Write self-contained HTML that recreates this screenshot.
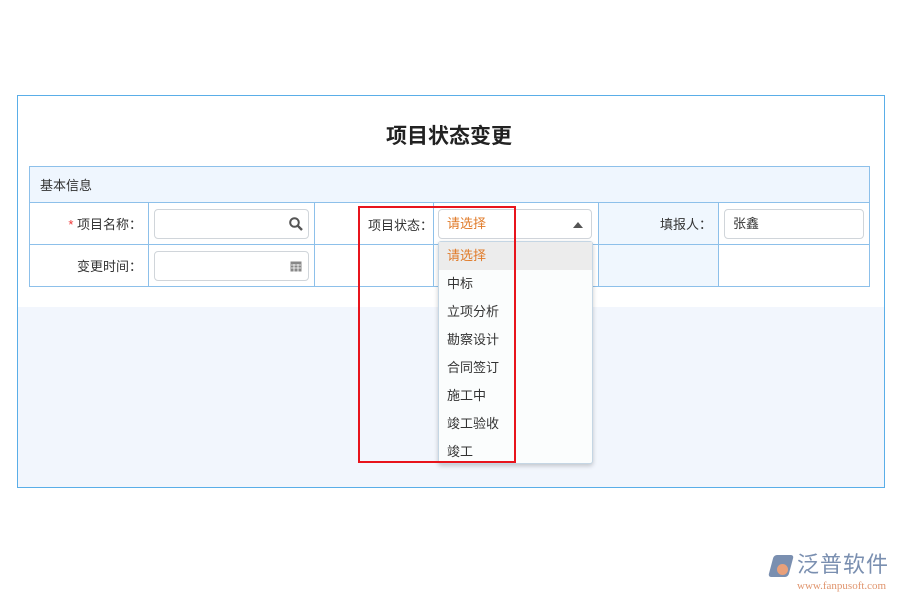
<!DOCTYPE html>
<html><head><meta charset="utf-8"><style>
*{box-sizing:border-box;margin:0;padding:0}
body{width:900px;height:600px;background:#fff;position:relative;font-family:"Liberation Sans","Noto Sans CJK SC",sans-serif;font-size:13px;color:#333;overflow:hidden}
.outer{position:absolute;left:17px;top:95px;width:868px;height:393px;border:1px solid #5aaee8;background:#fff}
.lower{position:absolute;left:18px;top:307px;width:866px;height:180px;background:#f2f6fd}
.title{position:absolute;left:0;width:898px;top:120px;text-align:center;font-size:21px;font-weight:bold;color:#222}
table{position:absolute;left:29px;top:166px;border-collapse:collapse;width:841px}
td{border:1px solid #8dc0ea;height:42px;font-size:13px}
.hd td{height:36px;background:#eff6fe;padding-left:10px}
.lb{text-align:right;padding-right:6px;background:#f0f7fe}
.inp{height:30px;border:1px solid #d0d5da;border-radius:4px;background:#fff;margin:0 5px;position:relative;padding-left:8px;line-height:28px}
.dd{position:absolute;left:438px;top:241px;width:155px;height:223px;background:#fbfdfd;border:1px solid #c5d6e4;border-radius:3px;box-shadow:0 2px 5px rgba(0,0,0,.2)}
.dd div{height:28px;line-height:28px;padding-left:8px;font-size:13px}
.red{position:absolute;left:358px;top:206px;width:158px;height:257px;border:2px solid #e8141c}
</style></head><body>
<div class="outer"></div>
<div class="lower"></div>
<div class="title">项目状态变更</div>
<table>
<tr class="hd"><td colspan="6">基本信息</td></tr>
<tr>
<td class="lb" style="width:119px;background:#fff"><span style="color:#e33">*</span> 项目名称：</td>
<td style="width:166px"><div class="inp"><svg style="position:absolute;right:5px;top:7px" width="14" height="14" viewBox="0 0 14 14"><circle cx="5.5" cy="5.5" r="4.3" fill="none" stroke="#555" stroke-width="2"/><path d="M8.7 8.7 13 13" stroke="#555" stroke-width="2.4"/></svg></div></td>
<td class="lb" style="width:119px;background:#fff"></td>
<td style="width:165px"></td>
<td class="lb" style="width:120px">填报人：</td>
<td><div class="inp">张鑫</div></td>
</tr>
<tr>
<td class="lb" style="background:#fff">变更时间：</td>
<td><div class="inp"><svg style="position:absolute;right:6px;top:8px" width="12" height="12" viewBox="0 0 12 12"><rect x="0.5" y="1.5" width="11" height="10" fill="#888"/><path d="M1 5h10M1 8h10M4 4v8M8 4v8" stroke="#fff" stroke-width="0.8"/></svg></div></td>
<td class="lb" style="background:#fff"></td><td></td><td class="lb"></td><td></td>
</tr>
</table>
<div style="position:absolute;left:368px;top:215px;font-size:13px">项目状态：</div>
<div class="inp" style="position:absolute;left:433px;top:209px;width:154px;color:#e07b2a">请选择<svg style="position:absolute;right:8px;top:12px" width="10" height="6"><path d="M0 6 5 0 10 6z" fill="#555"/></svg></div>
<div class="dd">
<div style="background:#ececec;color:#e07b2a">请选择</div><div>中标</div><div>立项分析</div><div>勘察设计</div><div>合同签订</div><div>施工中</div><div>竣工验收</div><div>竣工</div>
</div>
<div class="red"></div>
<div style="position:absolute;left:771px;top:555px;width:20px;height:22px;background:#7a8fb0;transform:skewX(-15deg);border-radius:3px"></div>
<div style="position:absolute;left:777px;top:564px;width:11px;height:11px;background:#e9a07a;border-radius:50%"></div>
<div style="position:absolute;left:797px;top:552px;font-size:22px;line-height:26px;color:#7a8fb0;letter-spacing:1px">泛普软件</div>
<div style="position:absolute;left:797px;top:580px;font-size:11px;line-height:13px;color:#e0956e;font-family:'Liberation Serif',serif">www.fanpusoft.com</div>
</body></html>
